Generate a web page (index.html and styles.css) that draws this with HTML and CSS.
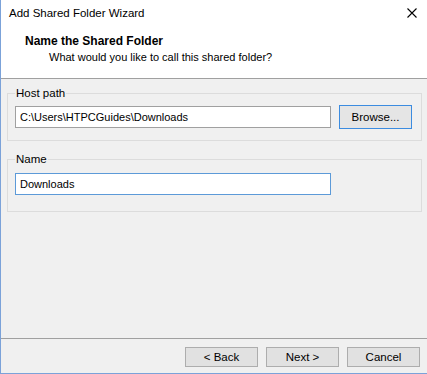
FILE: index.html
```html
<!DOCTYPE html>
<html lang="en">
<head>
    <meta charset="UTF-8">
    <title>Add Shared Folder Wizard</title>
    <link rel="stylesheet" href="styles.css">
</head>
<body>

    <div class="window">
        <div class="titlebar">
            <span class="title">Add Shared Folder Wizard</span>
            <svg class="close" width="10" height="10" viewBox="0 0 10 10">
                <path d="M0.5 0.5 L9.5 9.5 M9.5 0.5 L0.5 9.5" stroke="#000" stroke-width="1.1" fill="none"/>
            </svg>
        </div>

        <div class="header">
            <div class="heading">Name the Shared Folder</div>
            <div class="subheading">What would you like to call this shared folder?</div>
        </div>

        <div class="content">
            <div class="group">
                <span class="group-label">Host path</span>
                <div class="row">
                    <input class="field" type="text" value="C:\Users\HTPCGuides\Downloads">
                    <button class="button default">Browse...</button>
                </div>
            </div>

            <div class="group name-group">
                <span class="group-label">Name</span>
                <div class="row">
                    <input class="field focused" type="text" value="Downloads">
                </div>
            </div>
        </div>

        <div class="footer">
            <button class="button">&lt; Back</button>
            <button class="button">Next &gt;</button>
            <button class="button">Cancel</button>
        </div>
    </div>

</body>
</html>
```

FILE: styles.css
```css
body {
    margin: 0;
    font-family: 'Liberation Sans', Arial, sans-serif;
    font-size: 11.5px;
    color: #000;
    background-color: #f0f0f0;
}

.window {
    width: 427px;
    height: 374px;
    box-sizing: border-box;
    border-left: 1px solid #7ba2d9;
    border-bottom: 1px solid #7ba2d9;
    display: flex;
    flex-direction: column;
    background-color: #f0f0f0;
}

.titlebar {
    height: 30px;
    background-color: #fff;
    display: flex;
    align-items: center;
    justify-content: space-between;
    padding: 0 10px 0 8px;
}

.title {
    font-size: 11.5px;
    line-height: 16px;
    margin-top: -4px;
}

.close {
    margin-top: -5px;
}

.header {
    height: 49px;
    background-color: #fff;
    border-bottom: 1px solid #a0a0a0;
    padding: 3px 0 0 24px;
    box-sizing: border-box;
}

.heading {
    font-size: 12px;
    font-weight: bold;
    line-height: 16px;
}

.subheading {
    font-size: 11px;
    line-height: 16px;
    margin: 0 0 0 24px;
}

.content {
    flex: 1;
    padding: 14px 5px 0 6px;
}

.group {
    border: 1px solid #dcdcdc;
    padding: 0 0 11px 7px;
    margin-bottom: 18px;
    display: flex;
    flex-direction: column;
}

.group-label {
    align-self: flex-start;
    margin-top: -8px;
    line-height: 14px;
    padding: 0 1px;
    background-color: #f0f0f0;
}

.row {
    display: flex;
    align-items: center;
    gap: 8px;
    margin-top: 5px;
}

.name-group {
    padding-bottom: 16px;
}

.name-group .row {
    margin-top: 7px;
}

.field {
    width: 316px;
    height: 22px;
    box-sizing: border-box;
    border: 1px solid #a0a0a0;
    padding: 0 4px;
    font-family: inherit;
    font-size: 11px;
    color: #000;
    background-color: #fff;
    outline: none;
}

.field.focused {
    border-color: #5c9ad8;
}

.button {
    width: 73px;
    height: 20px;
    box-sizing: border-box;
    border: 1px solid #adadad;
    background-color: #e1e1e1;
    font-family: inherit;
    font-size: inherit;
    color: #000;
    padding: 0;
}

.button.default {
    height: 24px;
    border-color: #3c8ce0;
    background-color: #e5e5e5;
}

.footer {
    height: 35px;
    box-sizing: border-box;
    border-top: 1px solid #a0a0a0;
    display: flex;
    justify-content: flex-end;
    gap: 8px;
    padding: 8px 7px 0 0;
}
```
